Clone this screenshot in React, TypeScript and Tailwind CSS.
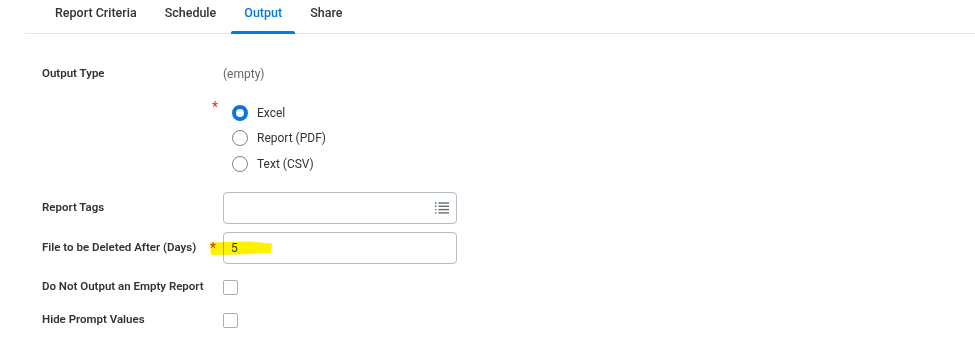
import { useState } from "react";

const tabs = ["Report Criteria", "Schedule", "Output", "Share"];

function Radio({ label, checked }: { label: string; checked?: boolean }) {
  return (
    <label className="flex items-center h-[25.5px] gap-[9px] cursor-pointer">
      {checked ? (
        <span className="w-[16px] h-[16px] rounded-full border-[4.5px] border-[#0875e1] bg-white" />
      ) : (
        <span className="w-[16px] h-[16px] rounded-full border-[1.5px] border-[#7b858f] bg-white" />
      )}
      <span className="text-[12px] text-[#333333]">{label}</span>
    </label>
  );
}

function Row({ label, children, className = "" }: { label: string; children: React.ReactNode; className?: string }) {
  return (
    <div className={`flex items-center ${className}`}>
      <div className="w-[181px] text-[11.5px] font-semibold text-[#333333]">{label}</div>
      {children}
    </div>
  );
}

function Checkbox() {
  return <span className="block w-[15px] h-[15px] rounded-[2px] border-[1.5px] border-[#a7aeb5] bg-white" />;
}

export default function App() {
  const [active] = useState("Output");
  return (
    <div className="w-[975px] h-[360px] bg-white overflow-hidden" style={{ fontFamily: "Roboto, 'Liberation Sans', sans-serif" }}>
      <div className="pl-[25px]">
        <div className="flex pl-[17px] gap-[2px] h-[34px] border-b border-[#e6e6e6]">
          {tabs.map((t) => (
            <div
              key={t}
              className={`relative px-[13px] pt-[4px] text-[12.5px] font-medium ${t === active ? "text-[#0875e1]" : "text-[#333333]"}`}
            >
              {t}
              {t === active && <span className="absolute left-0 right-0 bottom-[-1px] h-[3px] rounded-t-[2px] bg-[#0875e1]" />}
            </div>
          ))}
        </div>
      </div>

      <div className="pl-[42px] pt-[32px]">
        <Row label="Output Type" className="h-[16px]">
          <span className="text-[12px] text-[#666666]">(empty)</span>
        </Row>

        <div className="flex mt-[18px]">
          <div className="w-[170px]" />
          <span className="w-[20px] text-[14px] text-[#de2e21] leading-none pt-[0px]">*</span>
          <div className="flex flex-col">
            <Radio label="Excel" checked />
            <Radio label="Report (PDF)" />
            <Radio label="Text (CSV)" />
          </div>
        </div>

        <div className="flex items-center mt-[15px]">
          <div className="w-[181px] text-[11.5px] font-semibold text-[#333333]">Report Tags</div>
          <div className="flex items-center justify-end w-[234px] h-[32px] rounded-[4px] border border-[#b4bcc4] pr-[6px]">
            <svg width="16" height="14" viewBox="0 0 16 14" fill="none" stroke="#5f6b76" strokeWidth="1.4">
              <line x1="1" y1="2" x2="2.5" y2="2" />
              <line x1="4.5" y1="2" x2="15" y2="2" />
              <line x1="1" y1="5.3" x2="2.5" y2="5.3" />
              <line x1="4.5" y1="5.3" x2="15" y2="5.3" />
              <line x1="1" y1="8.6" x2="2.5" y2="8.6" />
              <line x1="4.5" y1="8.6" x2="15" y2="8.6" />
              <line x1="1" y1="11.9" x2="2.5" y2="11.9" />
              <line x1="4.5" y1="11.9" x2="15" y2="11.9" />
            </svg>
          </div>
        </div>

        <div className="relative flex items-center mt-[8px]">
          <div className="w-[168px] text-[11.5px] font-semibold text-[#333333]">File to be Deleted After (Days)</div>
          <span className="w-[13px] text-[14px] text-[#de2e21] leading-none pt-[1px]">*</span>
          <div className="flex items-center w-[234px] h-[32px] rounded-[4px] border border-[#b4bcc4] pl-[7px]">
            <span className="text-[12px] text-[#333333]">5</span>
          </div>
          <svg className="absolute left-[167px] top-[8px] mix-blend-multiply pointer-events-none" width="64" height="17" viewBox="0 0 64 17">
            <path d="M1 2.5 L40 1.5 L63 3.5 L62 13 L30 14.5 L2 15 Z" fill="#fff200" />
          </svg>
        </div>

        <Row label="Do Not Output an Empty Report" className="mt-[16px] h-[15px]">
          <Checkbox />
        </Row>
        <Row label="Hide Prompt Values" className="mt-[18px] h-[15px]">
          <Checkbox />
        </Row>
      </div>
    </div>
  );
}
